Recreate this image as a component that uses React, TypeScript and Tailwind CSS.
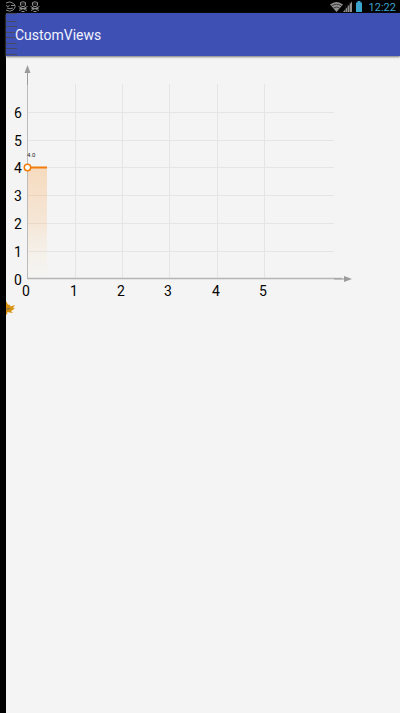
import React from 'react';

const columns = [0, 1, 2, 3, 4, 5];
const rows = [0, 1, 2, 3, 4, 5, 6];
const columnX = [21, 69, 116, 163, 211, 258];
const rowY = [223, 195, 167, 139, 111, 84, 56];

function Bug() {
  return (
    <svg width="10" height="11" viewBox="0 0 10 11" fill="none" stroke="#8c8c8c" aria-hidden="true">
      <path d="M2.500 1.500Q5 0 7.500 1.500V4L6.500 5.500h-3L2.500 4Z" />
      <path d="M3.500 3h1M5.500 3h1M.5 5.500 9 9.500M9.500 5.500 1 9.500M1.500 7.500h7M3.500 10.500h3" />
    </svg>
  );
}

function StatusBar() {
  return (
    <div className="flex h-[13px] items-center justify-between overflow-hidden bg-black pr-1">
      <div className="flex items-center gap-[2px]">
        <svg width="10" height="11" viewBox="0 0 10 11" fill="none" stroke="#8c8c8c" aria-hidden="true">
          <path d="M0 2Q4-.5 7.500 2.500T7 9Q4 11.500 0 9M0 4.500l2 1 1.500-1M5 4.500h4M1 7q3 1.500 6 0" />
        </svg>
        <Bug />
        <Bug />
      </div>
      <div className="flex items-center">
        <svg width="36" height="13" viewBox="0 0 36 13" aria-hidden="true">
          <path d="M1 4.500Q7.500-.5 14 4.500L7.500 12Z" fill="#8f8f8f" />
          <path d="M2.500 6Q7.500 2.500 12.500 6M4.500 8Q7.500 6 10.500 8" fill="none" stroke="#222" strokeWidth=".8" />
          <path d="M14 12 23 1.500V12Z" fill="#8f8f8f" />
          <path d="M16.500 5v7M18.500 4v8M20.500 2v10" stroke="#222" strokeWidth=".6" />
          <path d="M27 2.500h1.500V1h3v1.500H33V12h-6Z" fill="#3ba4cf" />
        </svg>
        <time className="ml-1 mt-[2px] font-[Roboto,sans-serif] text-[11px] leading-[13px] text-[#3ba4cf]">12:22</time>
      </div>
    </div>
  );
}

function Chart() {
  return (
    <svg width="350" height="244" viewBox="0 0 350 244" className="block font-[Roboto,sans-serif]" role="img" aria-label="Line chart">
      <defs>
        <linearGradient id="area" x1="0" y1="0" x2="0" y2="1">
          <stop offset="0" stopColor="#ff8000" stopOpacity=".22" />
          <stop offset=".5" stopColor="#ff9020" stopOpacity=".14" />
          <stop offset="1" stopColor="#fff0b0" stopOpacity=".03" />
        </linearGradient>
      </defs>
      <g stroke="#e5e5e5" strokeWidth="1">
        {columnX.slice(1).map((x) => <path key={x} d={`M${x + 0.5} 28V222`} />)}
        {rowY.slice(1).map((y) => <path key={y} d={`M22 ${y + 0.5}H328`} />)}
      </g>
      <rect x="22" y="112" width="19" height="110" fill="url(#area)" />
      <path d="M21.500 16V222.500" stroke="#bcbcbc" />
      <path d="M21 222.500H336" stroke="#b5b5b5" strokeWidth="1.500" />
      <path d="M21.500 9 24.500 17h-6ZM346 223l-8-3v6Z" fill="#9b9b9b" />
      <path d="M21.500 17v12M328 223h10" stroke="#9b9b9b" />
      <path d="M22 111.500H41" stroke="#f27d0c" strokeWidth="2" />
      <circle cx="21.500" cy="111.500" r="3.200" fill="#fff" stroke="#f27d0c" strokeWidth="1.500" />
      <text x="21" y="101" fontSize="6" fill="#222">4.0</text>
      <g fontSize="14" fill="#050505">
        {rows.map((n) => <text key={n} x="8" y={rowY[n] + 6}>{n}</text>)}
        {columns.map((n) => <text key={n} x={columnX[n] - 1} y="240" textAnchor="middle">{n}</text>)}
      </g>
    </svg>
  );
}

export default function App() {
  return (
    <div className="flex min-h-screen flex-col bg-black pl-[6px]">
      <StatusBar />
      <header className="relative flex h-[43px] items-center bg-[#3e50b4] px-[9px] shadow-[0_1px_2px_#777]">
        <svg className="absolute left-0 top-0" width="12" height="43" viewBox="0 0 12 43" aria-hidden="true">
          <path d="M0 .5h11M0 8.500h11M0 13.500h11M0 19.500h11M0 24.500h11M0 30.500h11M0 35.500h11M0 41.500h11" stroke="#464b62" />
        </svg>
        <h1 className="relative pt-px font-[Roboto,sans-serif] text-[14px] leading-5 text-[#f1f3ff]">CustomViews</h1>
      </header>
      <main className="flex-1 bg-[#f4f4f4]">
        <Chart />
        <svg width="10" height="18" viewBox="0 0 10 18" aria-hidden="true">
          <path d="M0 1 2 4.500 4 5l.5 1.500L9 5 7 8l2 .5L5 11l2 2-3-.5L1.500 12 1 15 0 14Z" fill="#d8920f" />
          <path d="M0 8.500h4L0 10.500" stroke="#8b7350" strokeWidth=".8" fill="none" />
        </svg>
      </main>
    </div>
  );
}
